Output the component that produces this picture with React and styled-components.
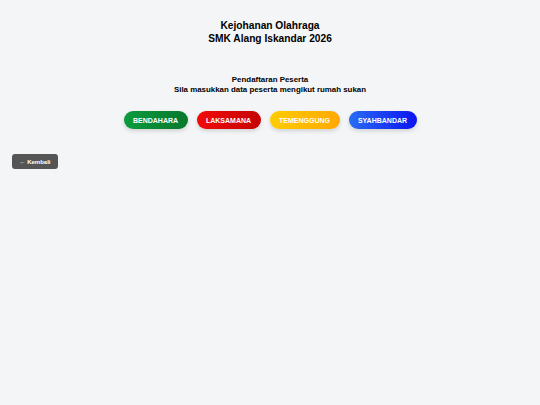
import React from "react";
import styled, { createGlobalStyle } from "styled-components";

const Global = createGlobalStyle`
  html, body { margin: 0; padding: 0; background: #f4f5f7; }
  body { font-family: "Liberation Sans", Arial, sans-serif; color: #000; }
`;

const Page = styled.div`
  min-height: 405px;
  padding: 19px 12px 0;
  box-sizing: border-box;
`;

const Header = styled.header`
  text-align: center;
  font-size: 10.2px;
  font-weight: bold;
  line-height: 13px;
`;

const Intro = styled.section`
  margin-top: 30px;
  text-align: center;
  font-size: 7.9px;
  font-weight: bold;
  line-height: 10px;
`;

const Houses = styled.div`
  margin-top: 16px;
  display: flex;
  justify-content: center;
  gap: 9px;
`;

const House = styled.button`
  height: 18px;
  width: ${(p) => p.$w}px;
  padding: 0;
  border: none;
  border-radius: 9px;
  font-family: "Liberation Sans", Arial, sans-serif;
  font-size: 7px;
  font-weight: bold;
  color: #fff;
  background: ${(p) => p.$bg};
  box-shadow: 0 2px 4px rgba(0, 0, 0, 0.15);
  cursor: pointer;
`;

const Back = styled.button`
  margin-top: 25px;
  height: 15px;
  width: 46px;
  padding: 0;
  border: none;
  border-radius: 3px;
  background: #555;
  color: #fff;
  font-family: "Liberation Sans", Arial, sans-serif;
  font-size: 6px;
  font-weight: bold;
  display: block;
`;

const houses = [
  { name: "BENDAHARA", bg: "linear-gradient(90deg, #0a9b3e, #07782c)", w: 64 },
  { name: "LAKSAMANA", bg: "linear-gradient(90deg, #f20a0a, #c40404)", w: 64 },
  { name: "TEMENGGUNG", bg: "linear-gradient(90deg, #ffcc00, #ffa800)", w: 70 },
  { name: "SYAHBANDAR", bg: "linear-gradient(90deg, #2a6cf5, #0a14f0)", w: 68 },
];

export default function App() {
  return (
    <>
      <Global />
      <Page>
        <Header>
          <div>Kejohanan Olahraga</div>
          <div>SMK Alang Iskandar 2026</div>
        </Header>
        <Intro>
          <div>Pendaftaran Peserta</div>
          <div>Sila masukkan data peserta mengikut rumah sukan</div>
        </Intro>
        <Houses>
          {houses.map((h) => (
            <House key={h.name} $bg={h.bg} $w={h.w}>
              {h.name}
            </House>
          ))}
        </Houses>
        <Back>← Kembali</Back>
      </Page>
    </>
  );
}
